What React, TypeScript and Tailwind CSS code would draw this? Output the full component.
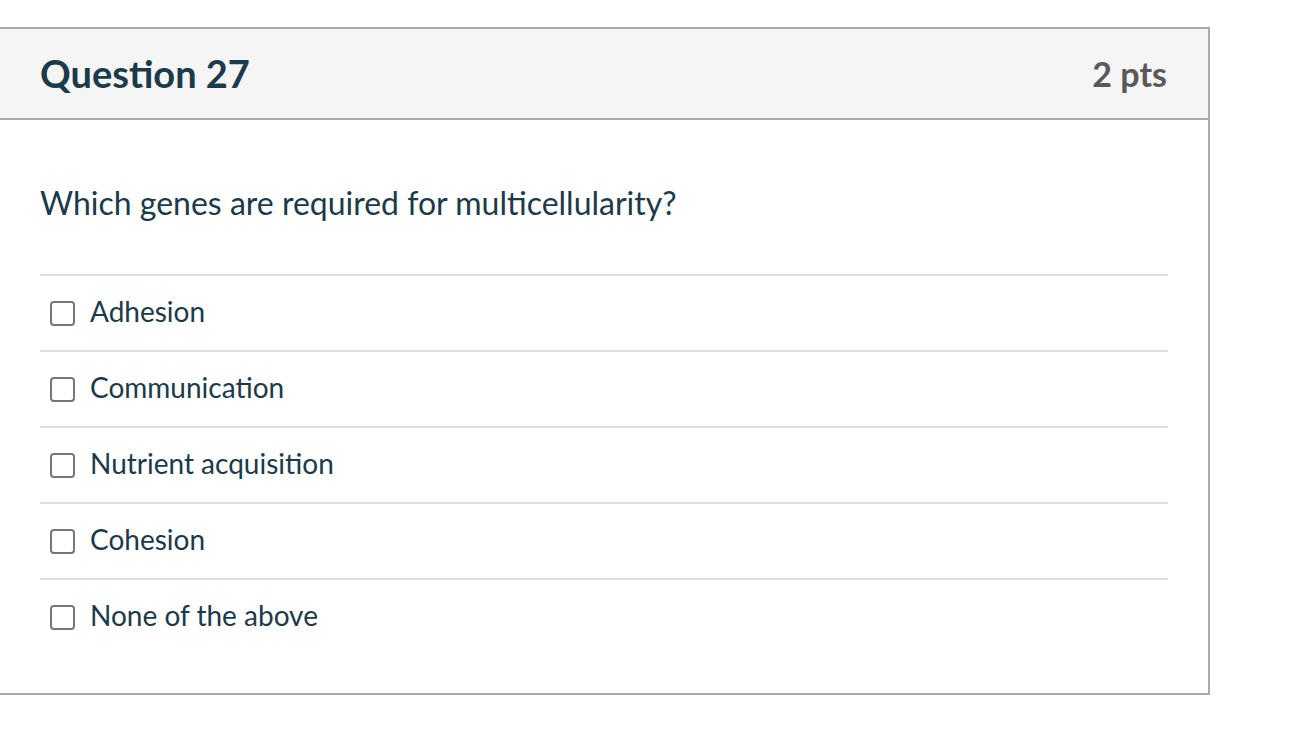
export default function App() {
  const options = [
    "Adhesion",
    "Communication",
    "Nutrient acquisition",
    "Cohesion",
    "None of the above",
  ];

  return (
    <div className="min-h-screen bg-white pt-[27px]" style={{ fontFamily: "Lato, 'Open Sans', sans-serif" }}>
      <div className="w-[1210px] border-2 border-l-0 border-[#aaaaaa] bg-white">
        <div className="flex h-[91px] items-center justify-between border-b-2 border-[#aaaaaa] bg-[#f5f5f5] pl-10 pr-[41px]">
          <h2 className="text-[38px] font-bold text-[#1b3a4a]">Question 27</h2>
          <span className="text-[34px] font-bold text-[#595959]">2 pts</span>
        </div>
        <div className="px-10 pb-[39px]">
          <p className="pt-[65px] pb-[53px] text-[32px] leading-[36px] text-[#1b3a4a]">
            Which genes are required for multicellularity?
          </p>
          <div>
            {options.map((opt) => (
              <label
                key={opt}
                className="flex h-[76px] items-center gap-[15px] border-t-2 border-[#dddddd] pl-[10px]"
              >
                <span className="h-[25px] w-[25px] shrink-0 rounded-[4px] border-2 border-[#777777] bg-white" />
                <span className="mb-[4px] text-[28px] leading-[34px] text-[#1b3a4a]">{opt}</span>
              </label>
            ))}
          </div>
        </div>
      </div>
    </div>
  );
}
